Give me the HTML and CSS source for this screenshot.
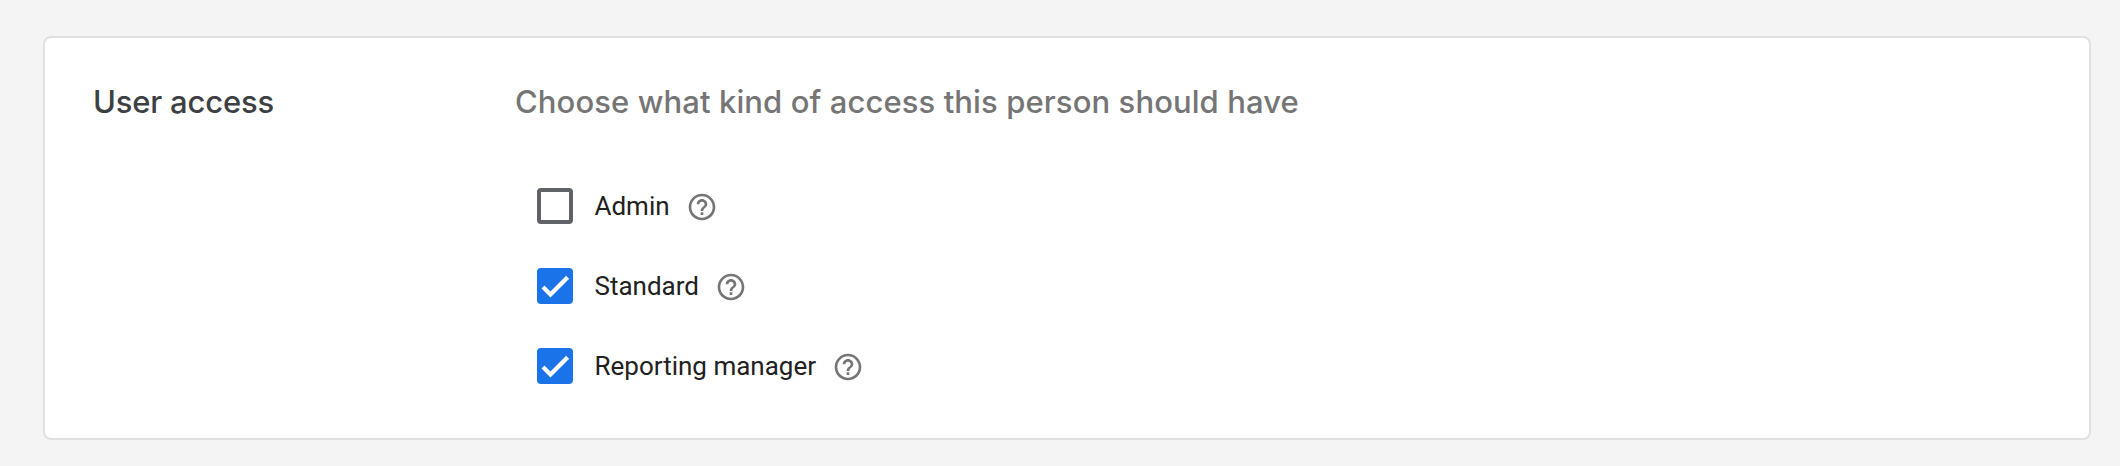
FILE: index.html
```html
<!DOCTYPE html>
<html lang="en">
<head>
    <meta charset="UTF-8">
    <meta name="viewport" content="width=device-width, initial-scale=1.0">
    <title>User access</title>
    <link rel="stylesheet" href="styles.css">
</head>
<body>

    <svg class="icon-defs">
        <symbol id="help" viewBox="0 0 24 24">
            <path d="M11 18h2v-2h-2v2zm1-16C6.48 2 2 6.48 2 12s4.48 10 10 10 10-4.48 10-10S17.52 2 12 2zm0 18c-4.41 0-8-3.59-8-8s3.59-8 8-8 8 3.59 8 8-3.59 8-8 8zm0-14c-2.21 0-4 1.79-4 4h2c0-1.1.9-2 2-2s2 .9 2 2c0 2-3 1.75-3 5h2c0-2.25 3-2.5 3-5 0-2.21-1.79-4-4-4z"/>
        </symbol>
        <symbol id="check" viewBox="0 0 24 24">
            <path d="M1.73 12.91 8.1 19.28 22.79 4.59"/>
        </symbol>
    </svg>

    <section class="card">
        <h2 class="title">User access</h2>

        <div class="content">
            <h3 class="subtitle">Choose what kind of access this person should have</h3>

            <div class="options">
                <div class="option" role="checkbox" aria-checked="false">
                    <span class="box"></span>
                    <span class="label">Admin</span>
                    <svg class="help"><use href="#help"/></svg>
                </div>
                <div class="option" role="checkbox" aria-checked="true">
                    <span class="box checked"><svg class="check"><use href="#check"/></svg></span>
                    <span class="label">Standard</span>
                    <svg class="help"><use href="#help"/></svg>
                </div>
                <div class="option" role="checkbox" aria-checked="true">
                    <span class="box checked"><svg class="check"><use href="#check"/></svg></span>
                    <span class="label">Reporting manager</span>
                    <svg class="help"><use href="#help"/></svg>
                </div>
            </div>
        </div>
    </section>

</body>
</html>
```

FILE: styles.css
```css
* {
    box-sizing: border-box;
}

body {
    margin: 0;
    padding: 36px 29px 26px 43px;
    background-color: #f4f4f4;
    font-family: Roboto, sans-serif;
}

.icon-defs {
    display: none;
}

.card {
    display: flex;
    height: 404px;
    padding: 44px 48px;
    background-color: #fff;
    border: 2px solid #e0e0e0;
    border-radius: 8px;
}

.title,
.subtitle {
    margin: 0;
    font-family: Inter, sans-serif;
    font-size: 31px;
    font-weight: 500;
    line-height: 40px;
    white-space: nowrap;
}

.title {
    width: 422px;
    color: #3c4043;
    letter-spacing: -0.2px;
}

.subtitle {
    color: #757575;
    letter-spacing: 0.1px;
}

.options {
    margin-top: 44px;
    padding-left: 21.5px;
}

.option {
    display: flex;
    align-items: center;
    height: 80px;
}

.box {
    display: flex;
    align-items: center;
    justify-content: center;
    width: 36px;
    height: 36px;
    border: 4px solid #5f6368;
    border-radius: 4px;
}

.box.checked {
    background-color: #1a73e8;
    border-color: #1a73e8;
}

.check {
    width: 28px;
    height: 28px;
    fill: none;
    stroke: #fff;
    stroke-width: 3.6;
}

.label {
    margin-left: 22px;
    color: #212121;
    font-size: 26px;
}

.help {
    width: 32px;
    height: 32px;
    margin: 2px 0 0 16.3px;
    fill: #757575;
}
```
